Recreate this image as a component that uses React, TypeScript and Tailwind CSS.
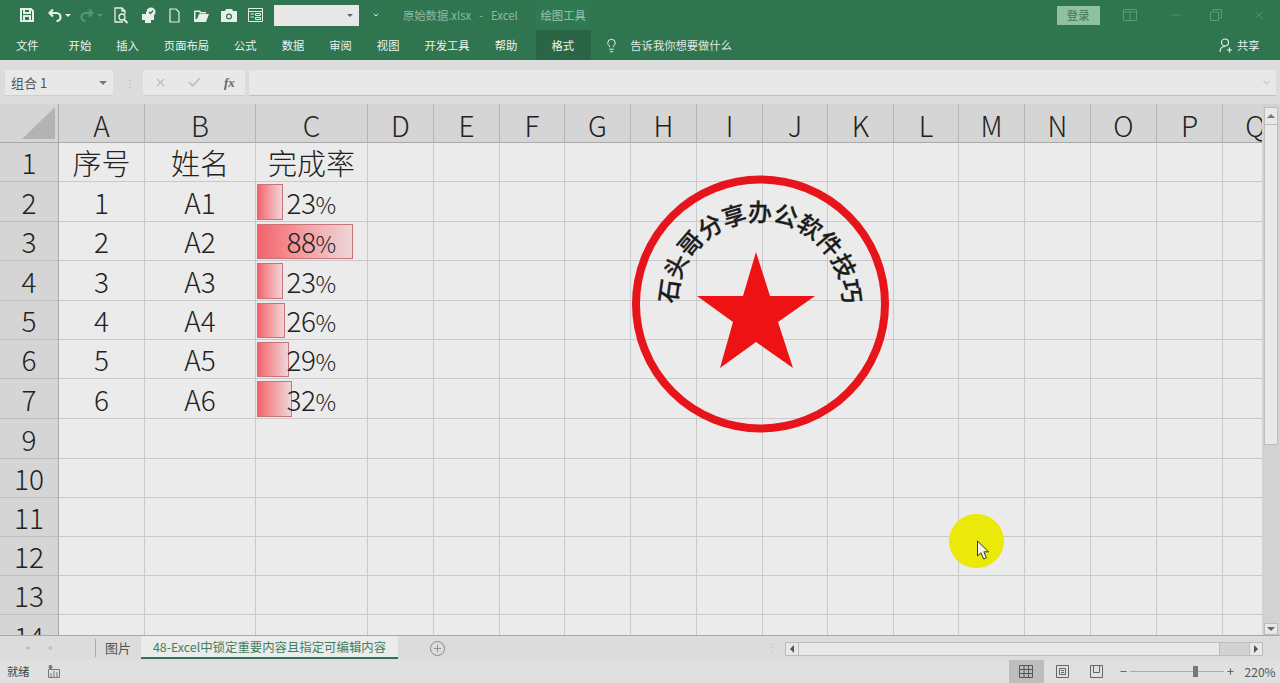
import { ChevronDown, Lightbulb, Minus, Plus, X, Check } from "lucide-react";

const COLUMNS = ["A", "B", "C", "D", "E", "F", "G", "H", "I", "J", "K", "L", "M", "N", "O", "P", "Q"];
const ROWS = ["1", "2", "3", "4", "5", "6", "7", "9", "10", "11", "12", "13", "14"];
const TABS = ["开始", "插入", "页面布局", "公式", "数据", "审阅", "视图", "开发工具", "帮助"];
const STAMP_TEXT = "石头哥分享办公软件技巧".split("");

const DATA: Record<string, { a: string; b: string; c: string; bar?: string }> = {
  "1": { a: "序号", b: "姓名", c: "完成率" },
  "2": { a: "1", b: "A1", c: "23%", bar: "w-[26px]" },
  "3": { a: "2", b: "A2", c: "88%", bar: "w-[96px]" },
  "4": { a: "3", b: "A3", c: "23%", bar: "w-[26px]" },
  "5": { a: "4", b: "A4", c: "26%", bar: "w-[28px]" },
  "6": { a: "5", b: "A5", c: "29%", bar: "w-[32px]" },
  "7": { a: "6", b: "A6", c: "32%", bar: "w-[35px]" },
};

function Cell({ text, bar, big }: { text?: string; bar?: string; big?: boolean }) {
  const isPercent = text?.endsWith("%");
  return (
    <div className={`relative flex items-center justify-center border-r border-b border-[#c9c9c9] font-light leading-none whitespace-nowrap text-[#222] ${big ? "text-[29px]" : "text-[28px]"}`}>
      {bar && (
        <div className={`absolute left-[1px] top-[2px] bottom-[1px] border border-[#c9737b] bg-gradient-to-r from-[#f2626c] to-[#ecd6d9] ${bar}`} />
      )}
      {text && !isPercent && <span className="relative">{text}</span>}
      {isPercent && (
        <span className="relative -ml-[1px] tracking-[-0.5px]">
          {text?.slice(0, -1)}
          <span className="text-[23px]">%</span>
        </span>
      )}
    </div>
  );
}

function Sheet() {
  return (
    <div className="relative h-[531px] w-[1262px] overflow-hidden">
      <div className="grid w-[1289px] grid-cols-[59px_86px_111px_112px_66px_66px_65px_66px_66px_66px_65px_66px_65px_66px_66px_66px_66px_66px] grid-rows-[39px_39px_40px_39px_40px_39px_39px_40px_40px_39px_39px_39px_39px_21px] font-['Noto_Sans_CJK_SC',sans-serif]">
        <div className="flex items-end justify-end border-r border-b border-[#a9a9a9] bg-[#d5d5d5] pr-[2px] pb-[3px]">
          <svg width="34" height="32" viewBox="0 0 34 32">
            <path d="M33 0V32H0Z" fill="#b3b3b3" />
          </svg>
        </div>
        {COLUMNS.map((c) => (
          <div key={c} className="flex items-center justify-center border-r border-b border-b-[#a9a9a9] border-r-[#b5b5b5] bg-[#d5d5d5] pt-[4px] text-[28px] font-light leading-none text-[#222]">
            {c}
          </div>
        ))}
        {ROWS.map((r) => {
          const row = DATA[r];
          return [
            <div key={`h${r}`} className="flex items-center justify-center overflow-hidden border-r border-b border-r-[#a9a9a9] border-b-[#bdbdbd] bg-[#d5d5d5] text-[28px] font-light leading-none text-[#222]">
              <span className={r === "14" ? "mt-[22px]" : ""}>{r}</span>
            </div>,
            <Cell key={`a${r}`} text={row?.a} big={r === "1"} />,
            <Cell key={`b${r}`} text={row?.b} big={r === "1"} />,
            <Cell key={`c${r}`} text={row?.c} bar={row?.bar} big={r === "1"} />,
            ...COLUMNS.slice(3).map((c) => <Cell key={c + r} />),
          ];
        })}
      </div>

      {/* stamp shape group */}
      <svg className="absolute left-[620px] top-[61px]" width="280" height="280" viewBox="620 165 280 280">
        <circle cx="760.5" cy="304" r="124.500" fill="none" stroke="#e8141c" strokeWidth="8" />
        <path d="M756 252 770 296H815L778 322 793 368 756 342 720 368 733 322 697 296H743Z" fill="#ef1214" />
        {STAMP_TEXT.map((ch, i) => (
          <text
            key={i}
            x="760"
            y="221"
            textAnchor="middle"
            fontSize="24"
            fontWeight="500"
            fill="#1c1c1c"
            stroke="#1c1c1c"
            strokeWidth="0.3"
            fontFamily="'Noto Sans CJK SC', sans-serif"
            transform={`rotate(${-82 + i * 16.4} 760 304)`}
          >
            {ch}
          </text>
        ))}
      </svg>

      {/* mouse highlight */}
      <div className="absolute left-[949px] top-[410px] h-[54px] w-[55px] rounded-full bg-[#ebe90a]" />
      <svg className="absolute left-[976px] top-[436px]" width="14" height="21" viewBox="0 0 14 21">
        <path d="M1.5 1V16L5 12.8 7.6 19 10.4 17.8 7.8 11.8H12.5Z" fill="#f4f4f4" stroke="#333" strokeWidth="1" />
      </svg>
    </div>
  );
}

function VerticalScroll() {
  return (
    <div className="flex h-[531px] w-[18px] flex-col items-center bg-[#d2d2d2] pt-[3px]">
      <div className="flex h-[18px] w-[14px] items-center justify-center border border-[#bdbdbd] bg-[#e8e8e8]">
        <div className="h-0 w-0 border-x-[4px] border-b-[4px] border-x-transparent border-b-[#777]" />
      </div>
      <div className="h-[320px] w-[14px] border-x border-b border-[#bdbdbd] bg-[#e8e8e8]" />
      <div className="flex-1" />
      <div className="flex h-[12px] w-[14px] items-center justify-center border border-[#bdbdbd] bg-[#e8e8e8]">
        <div className="h-0 w-0 border-x-[4px] border-t-[4px] border-x-transparent border-t-[#666]" />
      </div>
    </div>
  );
}

export default function App() {
  return (
    <div className="flex h-[683px] w-[1280px] flex-col overflow-hidden bg-[#dcdcdc] font-['Noto_Sans_CJK_SC',sans-serif]">
      {/* title bar */}
      <div className="flex h-[30px] items-center bg-[#2f754f] pl-[19px] text-[#e8efe9]">
        <svg width="16" height="16" viewBox="0 0 16 16" fill="none" stroke="currentColor" strokeWidth="2">
          <path d="M2 2H12L14 4V14H2Z M5 2V6H11V2 M5 14V9H11V14" />
        </svg>
        <svg className="ml-[13px]" width="14" height="14" viewBox="0 0 14 14" fill="none" stroke="currentColor" strokeWidth="2.2">
          <path d="M5 1.5 1.5 5 5 8.5 M2 5H8.5C11 5 12.5 7 12.5 9S11 13 8.5 13" />
        </svg>
        <div className="ml-[3px] h-0 w-0 border-x-[3px] border-t-[3px] border-x-transparent border-t-[#e8efe9]" />
        <svg className="ml-[9px] text-[#5c9476]" width="14" height="14" viewBox="0 0 14 14" fill="none" stroke="currentColor" strokeWidth="2.2">
          <path d="M9 1.5 12.5 5 9 8.5 M12 5H5.5C3 5 1.5 7 1.5 9S3 13 5.5 13" />
        </svg>
        <div className="ml-[3px] h-0 w-0 border-x-[3px] border-t-[3px] border-x-transparent border-t-[#5c9476]" />
        <svg className="ml-[11px]" width="15" height="17" viewBox="0 0 15 17" fill="none" stroke="currentColor" strokeWidth="1.3">
          <path d="M9 15H1V1H8L11 4V7 M8 1V4H11" />
          <circle cx="8" cy="10" r="3" />
          <path d="M10 12.5 13.5 16" strokeWidth="1.8" />
        </svg>
        <svg className="ml-[11px]" width="16" height="17" viewBox="0 0 16 17" fill="currentColor">
          <path d="M2 7H6V5H10V7H14V13H11V16H5V13H2Z" />
          <circle cx="11" cy="5" r="4.5" />
          <path d="M9 5 10.5 6.5 13 3.5" fill="none" stroke="#2f754f" strokeWidth="1.3" />
        </svg>
        <svg className="ml-[13px]" width="11" height="15" viewBox="0 0 11 15" fill="none" stroke="currentColor" strokeWidth="1.2">
          <path d="M1 1H7L10 4V14H1Z" />
        </svg>
        <svg className="ml-[14px]" width="15" height="13" viewBox="0 0 15 13" fill="currentColor">
          <path d="M0 2V13H12L15 5H5L3 10H1.500V3H5L6 4.500H12V3H7L6 1.500H1Z" />
        </svg>
        <svg className="ml-[12px]" width="16" height="13" viewBox="0 0 16 13" fill="currentColor">
          <path d="M0 2H4L5 0H11L12 2H16V13H0Z" />
          <circle cx="8" cy="7.500" r="3" fill="#2f754f" />
          <circle cx="8" cy="7.500" r="1.800" fill="currentColor" />
        </svg>
        <svg className="ml-[11px]" width="15" height="14" viewBox="0 0 15 14" fill="none" stroke="currentColor" strokeWidth="1">
          <path d="M.5.5H14.500V13.500H.5Z M.5 3.500H14.500 M2.500 6H6 M2.500 9H6 M7.500 5.500H12.500V7.500H7.500Z M7.500 9.500H12.500V11.500H7.500Z" />
        </svg>
        <div className="ml-[11px] flex h-[21px] w-[85px] items-center justify-end bg-[#e8e8e8] pr-[6px]">
          <div className="h-0 w-0 border-x-[3px] border-t-[3px] border-x-transparent border-t-[#666]" />
        </div>
        <ChevronDown size={8} strokeWidth={3} className="ml-[13px]" />
        <div className="ml-[23px] flex gap-[8px] text-[11.3px] text-[#8fb8a1]">
          <span>原始数据.xlsx</span>
          <span>-</span>
          <span>Excel</span>
        </div>
        <div className="ml-[18px] flex h-[30px] w-[55px] items-center justify-center bg-[#2f7a52] text-[11.3px] text-[#9cc4ad]">绘图工具</div>
        <div className="ml-[466px] flex h-[19px] w-[43px] items-center justify-center bg-[#8fc09f] text-[11.3px] text-[#3f7355]">登录</div>
        <svg className="ml-[23px] text-[#5f9a78]" width="14" height="12" viewBox="0 0 14 12" fill="none" stroke="currentColor">
          <path d="M.5.5H13.500V11.500H.5Z M.5 3H13.500 M7 3V11.500" />
        </svg>
        <Minus size={14} strokeWidth={1.3} className="ml-[32px] text-[#5f9a78]" />
        <svg className="ml-[27px] text-[#5f9a78]" width="12" height="12" viewBox="0 0 12 12" fill="none" stroke="currentColor">
          <path d="M.5 3H8.500V11.500H.5Z M3 3V.5H11.500V9H8.500" />
        </svg>
        <X size={14} strokeWidth={1.3} className="ml-[30px] text-[#5f9a78]" />
      </div>

      {/* ribbon tabs */}
      <div className="flex h-[30px] items-center bg-[#2f754f] pl-[16px] text-[11.3px] text-[#eef3ef]">
        <span className="mr-[30px]">文件</span>
        <div className="flex gap-[25px]">
          {TABS.map((t) => (
            <span key={t}>{t}</span>
          ))}
        </div>
        <div className="ml-[19px] flex h-[30px] w-[55px] items-center justify-center bg-[#2a6645] pr-[2px]">格式</div>
        <Lightbulb size={15} strokeWidth={1.5} className="ml-[13px]" />
        <span className="ml-[11px] text-[#dfe9e3]">告诉我你想要做什么</span>
        <svg className="ml-[487px]" width="14" height="15" viewBox="0 0 14 15" fill="none" stroke="currentColor" strokeWidth="1.1">
          <circle cx="6" cy="4.500" r="3.500" />
          <path d="M1 14C1 10.500 3 8.500 6 8.500 M10.500 9.500V14.500 M8 12H13" />
        </svg>
        <span className="ml-[4px]">共享</span>
      </div>

      {/* formula bar */}
      <div className="flex h-[44px] items-start bg-[#dcdcdc] pt-[10px]">
        <div className="ml-[5px] flex h-[26px] w-[108px] items-center justify-between border-b border-[#cfcfcf] bg-[#e8e8e8] px-[6px] text-[13px] text-[#555]">
          <span>组合 1</span>
          <div className="h-0 w-0 border-x-[4px] border-t-[4px] border-x-transparent border-t-[#777]" />
        </div>
        <div className="ml-[12px] flex h-[26px] w-[4px] items-center text-[10px] leading-none text-[#aaa]">⋮</div>
        <div className="ml-[14px] flex h-[26px] w-[102px] items-center border-b border-[#cfcfcf] bg-[#e8e8e8] pl-[11px] text-[#bbb]">
          <X size={13} strokeWidth={2} />
          <Check size={15} strokeWidth={2.4} className="ml-[20px]" />
          <span className="ml-[22px] font-['Liberation_Serif',serif] text-[13px] font-bold italic text-[#666]">fx</span>
        </div>
        <div className="ml-[4px] flex h-[26px] w-[1027px] items-center justify-end border-b border-[#bfbfbf] bg-[#e8e8e8] pr-[4px]">
          <ChevronDown size={11} strokeWidth={2} className="text-[#aaa]" />
        </div>
      </div>

      {/* sheet */}
      <div className="flex h-[532px] border-b border-[#a9a9a9] bg-[#ebebeb]">
        <Sheet />
        <VerticalScroll />
      </div>

      {/* sheet tabs */}
      <div className="flex h-[24px] items-start bg-[#dcdcdc] text-[11.3px]">
        <span className="ml-[25px] mt-[7px] text-[8px] leading-none text-[#bbb]">◂</span>
        <span className="ml-[20px] mt-[7px] text-[8px] leading-none text-[#bbb]">▸</span>
        <div className="ml-[42px] mt-[3px] h-[18px] w-px bg-[#aaa]" />
        <span className="ml-[9px] mt-[2px] text-[13px] text-[#555]">图片</span>
        <div className="ml-[10px] flex h-[23px] w-[257px] items-center justify-center border-b-2 border-[#2f754f] bg-[#ebebeb] pt-[1px] text-[12.4px] text-[#3f8060]">
          48-Excel中锁定重要内容且指定可编辑内容
        </div>
        <div className="ml-[32px] mt-[5px] flex h-[15px] w-[15px] items-center justify-center rounded-full border border-[#888] text-[#777]">
          <Plus size={11} strokeWidth={1.6} />
        </div>
        <span className="ml-[322px] mt-[6px] w-[4px] text-[10px] leading-none text-[#bbb]">⋮</span>
        <div className="ml-[14px] mt-[6px] flex h-[14px] w-[478px] border border-[#bdbdbd] bg-[#d2d2d2]">
          <div className="flex w-[13px] items-center justify-center border-r border-[#bdbdbd] bg-[#e8e8e8]">
            <div className="h-0 w-0 border-y-[4px] border-r-[4px] border-y-transparent border-r-[#555]" />
          </div>
          <div className="w-[421px] border-r border-[#bdbdbd] bg-[#e8e8e8]" />
          <div className="flex-1" />
          <div className="flex w-[13px] items-center justify-center border-l border-[#bdbdbd] bg-[#e8e8e8]">
            <div className="h-0 w-0 border-y-[4px] border-l-[4px] border-y-transparent border-l-[#555]" />
          </div>
        </div>
      </div>

      {/* status bar */}
      <div className="flex h-[23px] items-center bg-[#e0e0e0] text-[11.3px] text-[#444]">
        <span className="ml-[7px]">就绪</span>
        <svg className="ml-[18px] text-[#777]" width="12" height="13" viewBox="0 0 12 13" fill="none" stroke="currentColor">
          <path d="M.5 4.500H11.500V12.500H.5Z M3 8V12 M6 6V12 M9 7V12" />
          <circle cx="2.500" cy="2" r="2" fill="currentColor" stroke="none" />
        </svg>
        <div className="ml-[949px] flex h-[23px] w-[35px] items-center justify-center bg-[#bdbdbd]">
          <svg className="text-[#555]" width="14" height="13" viewBox="0 0 14 13" fill="none" stroke="currentColor">
            <path d="M.5.5H13.500V12.500H.5Z M.5 4.500H13.500 M.5 8.500H13.500 M5 .5V12.500 M9.500 .5V12.500" />
          </svg>
        </div>
        <svg className="ml-[12px] text-[#666]" width="13" height="13" viewBox="0 0 13 13" fill="none" stroke="currentColor">
          <path d="M.5.5H12.500V12.500H.5Z M3.500 3.500H9.500V9.500H3.500Z M5 5.500H8 M5 7.500H8" />
        </svg>
        <svg className="ml-[21px] text-[#666]" width="13" height="13" viewBox="0 0 13 13" fill="none" stroke="currentColor">
          <path d="M.5.5H12.500V12.500H.5Z M3.500 .5V7.500H9.500V.5" />
        </svg>
        <Minus size={9} strokeWidth={3} className="ml-[16px] text-[#666]" />
        <div className="ml-[2px] flex h-[1px] w-[94px] items-center bg-[#aaa] pl-[63px]">
          <div className="h-[11px] w-[5px] bg-[#777]" />
        </div>
        <Plus size={9} strokeWidth={3} className="ml-[2px] text-[#666]" />
        <span className="ml-[10px] text-[12px] text-[#555]">220%</span>
      </div>
    </div>
  );
}
